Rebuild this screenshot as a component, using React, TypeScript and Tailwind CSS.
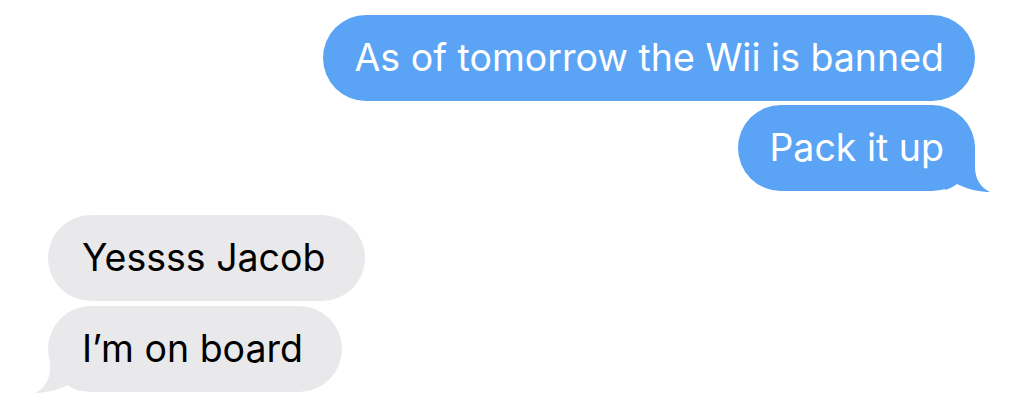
import React from "react";

const font = { fontFamily: '"Inter", "Roboto", "Liberation Sans", sans-serif' };

function BlueTail() {
  return (
    <svg
      className="absolute right-[-16px] bottom-[-2px]"
      width="46"
      height="48"
      viewBox="0 0 46 48"
    >
      <path
        d="M0 0 L30 0 L30 22 C30 34 36 43 45 47 C36 47 24 45 12 39 C8 42 4 44 0 45 Z"
        fill="#5aa3f5"
      />
    </svg>
  );
}

function GreyTail() {
  return (
    <svg
      className="absolute left-[-14px] bottom-[-2px]"
      width="46"
      height="48"
      viewBox="0 0 46 48"
    >
      <path
        d="M46 0 L16 0 L16 22 C16 34 10 43 1 47 C10 47 22 45 34 39 C38 42 42 44 46 45 Z"
        fill="#e9e9ec"
      />
    </svg>
  );
}

function Bubble({
  text,
  me,
  tail,
}: {
  text: string;
  me: boolean;
  tail?: boolean;
}) {
  return (
    <div
      className={
        me
          ? "relative h-[86px] rounded-[43px] bg-[#5aa3f5] text-white px-[31px] flex items-center"
          : "relative h-[86px] rounded-[43px] bg-[#e9e9ec] text-black pl-[34px] pr-[39px] flex items-center"
      }
    >
      {tail && (me ? <BlueTail /> : <GreyTail />)}
      <span className="relative text-[37.5px] leading-none whitespace-nowrap" style={font}>
        {text}
      </span>
    </div>
  );
}

export default function App() {
  return (
    <div className="w-[1024px] h-[402px] bg-white overflow-hidden flex flex-col">
      <div className="flex flex-col items-end gap-[4px] pt-[15px] pr-[49px]">
        <Bubble me text="As of tomorrow the Wii is banned" />
        <Bubble me tail text="Pack it up" />
      </div>
      <div className="flex flex-col items-start gap-[5px] pt-[24px] pl-[48px]">
        <Bubble me={false} text="Yessss Jacob" />
        <Bubble me={false} tail text="I’m on board" />
      </div>
    </div>
  );
}
